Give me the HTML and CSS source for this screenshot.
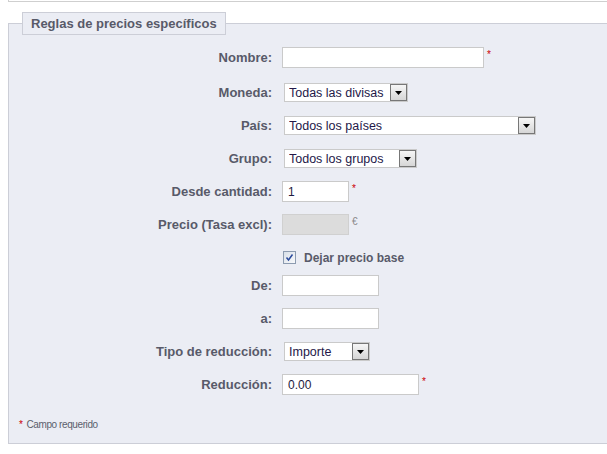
FILE: index.html
```html
<!DOCTYPE html>
<html lang="es">
<head>
<meta charset="utf-8">
<title>Reglas de precios específicos</title>
<link rel="stylesheet" href="styles.css">
</head>
<body>
<div class="prev"></div>
<fieldset class="rules">
  <legend class="rules-title">Reglas de precios específicos</legend>

  <div class="row row-first">
    <label class="lbl">Nombre:</label>
    <input class="inp w-name" type="text" value="">
    <span class="req">*</span>
  </div>

  <div class="row">
    <label class="lbl">Moneda:</label>
    <div class="sel w-cur"><span class="sel-text">Todas las divisas</span><span class="sel-btn"><svg width="7" height="4" viewBox="0 0 7 4"><path d="M0 0H7L3.5 4Z" fill="#000"/></svg></span></div>
  </div>

  <div class="row">
    <label class="lbl">País:</label>
    <div class="sel w-country"><span class="sel-text">Todos los países</span><span class="sel-btn"><svg width="7" height="4" viewBox="0 0 7 4"><path d="M0 0H7L3.5 4Z" fill="#000"/></svg></span></div>
  </div>

  <div class="row">
    <label class="lbl">Grupo:</label>
    <div class="sel w-group"><span class="sel-text">Todos los grupos</span><span class="sel-btn"><svg width="7" height="4" viewBox="0 0 7 4"><path d="M0 0H7L3.5 4Z" fill="#000"/></svg></span></div>
  </div>

  <div class="row">
    <label class="lbl">Desde cantidad:</label>
    <input class="inp w-qty" type="text" value="1">
    <span class="req">*</span>
  </div>

  <div class="row">
    <label class="lbl">Precio (Tasa excl):</label>
    <input class="inp inp-disabled w-qty" type="text" value="" disabled>
    <span class="unit">€</span>
  </div>

  <div class="row row-check">
    <span class="lbl-space"></span>
    <span class="chk"><svg width="9" height="9" viewBox="0 0 9 9"><path d="M1.5 4.5 L3.5 7 L7.5 1.5" fill="none" stroke="#2a4a9c" stroke-width="1.5"/></svg></span>
    <span class="chk-text">Dejar precio base</span>
  </div>

  <div class="row">
    <label class="lbl">De:</label>
    <input class="inp w-date" type="text" value="">
  </div>

  <div class="row">
    <label class="lbl">a:</label>
    <input class="inp w-date" type="text" value="">
  </div>

  <div class="row">
    <label class="lbl">Tipo de reducción:</label>
    <div class="sel w-type"><span class="sel-text">Importe</span><span class="sel-btn"><svg width="7" height="4" viewBox="0 0 7 4"><path d="M0 0H7L3.5 4Z" fill="#000"/></svg></span></div>
  </div>

  <div class="row">
    <label class="lbl">Reducción:</label>
    <input class="inp w-red" type="text" value="0.00">
    <span class="req">*</span>
  </div>

  <p class="note"><span class="note-star">*</span>Campo requerido</p>
</fieldset>
</body>
</html>
```

FILE: styles.css
```css
html, body {
  margin: 0;
  overflow: hidden;
  background: #fff;
}

body {
  padding: 0 0 0 8px;
  font-family: "Liberation Sans", Arial, sans-serif;
}

.prev {
  height: 1px;
  border-left: 1px solid #cfcfcf;
  border-bottom: 1px solid #cfcfcf;
  margin-bottom: 10px;
}

.rules {
  margin: 0;
  min-width: 0;
  padding: 12px 10px 12px 10px;
  border: 1px solid #ccced7;
  border-right: 0;
  background: #ebedf4;
}

.rules-title {
  margin-left: 3px;
  padding: 3px 8px;
  border: 1px solid #ccced7;
  background: #ebedf4;
  color: #585a69;
  font-weight: bold;
  font-size: 13px;
  line-height: 15px;
}

.row {
  display: flex;
  align-items: center;
  height: 21px;
  margin-bottom: 12px;
}

.row-first {
  margin-bottom: 14px;
}

.row-check {
  margin-bottom: 7px;
}

.lbl, .lbl-space {
  flex: 0 0 263px;
  box-sizing: border-box;
  padding-right: 10px;
  text-align: right;
  font-weight: bold;
  font-size: 13px;
  color: #585a69;
}

.inp {
  box-sizing: border-box;
  height: 21px;
  margin: 0;
  padding: 0 5px;
  border: 1px solid #cacaca;
  background: #fff;
  font-family: "Liberation Sans", Arial, sans-serif;
  font-size: 12px;
  color: #1d1a40;
  outline: none;
}

.inp-disabled {
  background: #dcdcdc;
  border-color: #d0d0d0;
}

.w-name { width: 202px; }
.w-qty { width: 67px; }
.w-date { width: 97px; }
.w-red { width: 137px; }

.req {
  align-self: flex-start;
  margin: 3px 0 0 3px;
  color: #cc0000;
  font-size: 10px;
  line-height: 10px;
}

.unit {
  align-self: flex-start;
  margin: 3px 0 0 3px;
  color: #8a8a8a;
  font-size: 10px;
  line-height: 10px;
}

.sel {
  display: flex;
  align-items: center;
  box-sizing: border-box;
  height: 19px;
  margin-left: 2px;
  padding-left: 4px;
  border: 1px solid #cacaca;
  background: #fff;
}

.sel-text {
  flex: 1;
  font-size: 12.5px;
  color: #241848;
  white-space: nowrap;
  overflow: hidden;
}

.sel-btn {
  display: flex;
  align-items: center;
  justify-content: center;
  box-sizing: border-box;
  width: 17px;
  height: 17px;
  padding-top: 1px;
  border: 1px solid #777;
  background: linear-gradient(#f6f6f6, #d6d6d6);
}

.w-cur { width: 124px; }
.w-country { width: 252px; }
.w-group { width: 133px; }
.w-type { width: 86px; }

.chk {
  display: flex;
  align-items: center;
  justify-content: center;
  box-sizing: border-box;
  width: 13px;
  height: 13px;
  margin-left: 1px;
  margin-right: 8px;
  border: 1px solid #8c9bb0;
  background: linear-gradient(135deg, #d8dfe8, #f8f9fb);
}

.chk-text {
  font-weight: bold;
  font-size: 12px;
  color: #585a69;
}

.note {
  margin: 23px 0 0;
  font-size: 10px;
  letter-spacing: -0.4px;
  line-height: 13px;
  color: #5c5f6c;
}

.note-star {
  color: #cc0000;
  font-size: 10px;
  vertical-align: top;
  margin-right: 4px;
}
```
